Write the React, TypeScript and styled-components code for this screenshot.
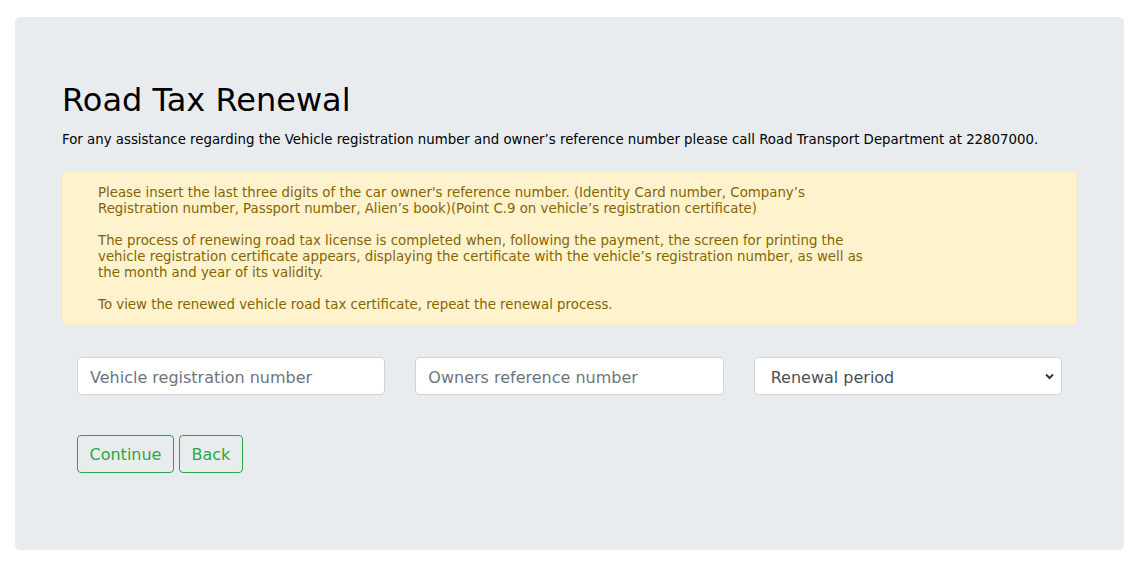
import React from "react";
import styled, { createGlobalStyle } from "styled-components";

const Global = createGlobalStyle`
  html, body { margin: 0; padding: 0; background: #ffffff; }
  body { font-family: "DejaVu Sans", Verdana, sans-serif; color: #212529; }
  * { box-sizing: border-box; }
`;

const Page = styled.div`
  padding: 17px 15px 11px 15px;
`;

const Jumbotron = styled.div`
  background: #e9ecef;
  border-radius: 5px;
  height: 533px;
  padding: 64px 47px 0 47px;
`;

const Title = styled.h1`
  margin: 0 0 13px 0;
  font-size: 32px;
  font-weight: 400;
  line-height: 38px;
  color: #000;
`;

const Lead = styled.p`
  margin: 0 0 23px 0;
  font-size: 13.33px;
  line-height: 16px;
  color: #000;
`;

const Alert = styled.div`
  background: #fff3cd;
  border: 1px solid #ffeeba;
  border-radius: 3px;
  padding: 13px 35px 11px 35px;
  color: #856404;
  font-size: 13.33px;
  line-height: 16px;
`;

const AlertText = styled.div`
  white-space: nowrap;
`;

const AlertPara = styled.p`
  margin: 0 0 16px 0;
  &:last-child { margin-bottom: 0; }
`;

const Row = styled.div`
  display: grid;
  grid-template-columns: repeat(3, 1fr);
  margin-top: 32px;
`;

const Col = styled.div`
  padding: 0 15px;
`;

const Input = styled.input`
  display: block;
  width: 100%;
  height: 38px;
  padding: 7px 12px 5px 12px;
  font-family: "DejaVu Sans", Verdana, sans-serif;
  font-size: 16px;
  color: #495057;
  background: #fff;
  border: 1px solid #ced4da;
  border-radius: 4px;
  outline: none;
  &::placeholder { color: #6c757d; opacity: 1; }
`;

const SelectWrap = styled.div`
  position: relative;
`;

const Select = styled.select`
  display: block;
  width: 100%;
  height: 38px;
  padding: 7px 30px 5px 16px;
  font-family: "DejaVu Sans", Verdana, sans-serif;
  font-size: 16px;
  color: #495057;
  background: #fff;
  border: 1px solid #ced4da;
  border-radius: 4px;
  appearance: none;
  outline: none;
`;

const Chevron = styled.svg`
  position: absolute;
  right: 8px;
  top: 16px;
  pointer-events: none;
`;

const Buttons = styled.div`
  display: flex;
  gap: 5px;
  padding: 0 15px;
  margin-top: 40px;
`;

const OutlineButton = styled.button`
  height: 38px;
  padding: 0 11.5px;
  font-family: "DejaVu Sans", Verdana, sans-serif;
  font-size: 16px;
  color: #28a745;
  background: transparent;
  border: 1px solid #28a745;
  border-radius: 4px;
  cursor: pointer;
`;

export default function App() {
  return (
    <>
      <Global />
      <Page>
        <Jumbotron>
          <Title>Road Tax Renewal</Title>
          <Lead>
            For any assistance regarding the Vehicle registration number and owner’s reference number please call Road Transport Department at 22807000.
          </Lead>
          <Alert>
            <AlertText>
              <AlertPara>
                Please insert the last three digits of the car owner's reference number. (Identity Card number, Company’s
                <br />
                Registration number, Passport number, Alien’s book)(Point C.9 on vehicle’s registration certificate)
              </AlertPara>
              <AlertPara>
                The process of renewing road tax license is completed when, following the payment, the screen for printing the
                <br />
                vehicle registration certificate appears, displaying the certificate with the vehicle’s registration number, as well as
                <br />
                the month and year of its validity.
              </AlertPara>
              <AlertPara>
                To view the renewed vehicle road tax certificate, repeat the renewal process.
              </AlertPara>
            </AlertText>
          </Alert>
          <Row>
            <Col>
              <Input placeholder="Vehicle registration number" />
            </Col>
            <Col>
              <Input placeholder="Owners reference number" />
            </Col>
            <Col>
              <SelectWrap>
                <Select defaultValue="">
                  <option value="">Renewal period</option>
                  <option value="6">6 months</option>
                  <option value="12">12 months</option>
                </Select>
                <Chevron width="9" height="7" viewBox="0 0 9 7">
                  <path d="M1 1.5 L4.5 5 L8 1.5" fill="none" stroke="#343a40" strokeWidth="2" />
                </Chevron>
              </SelectWrap>
            </Col>
          </Row>
          <Buttons>
            <OutlineButton>Continue</OutlineButton>
            <OutlineButton>Back</OutlineButton>
          </Buttons>
        </Jumbotron>
      </Page>
    </>
  );
}
